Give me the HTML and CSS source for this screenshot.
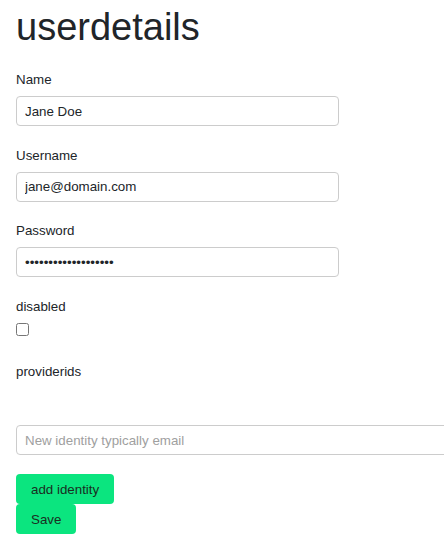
FILE: index.html
```html
<!DOCTYPE html>
<html>
<head>
<meta charset="utf-8">
<link rel="stylesheet" href="styles.css">
</head>
<body>
<div class="page">
  <h1 class="title">userdetails</h1>
  <div class="field">
    <label class="label">Name</label>
    <input class="input" type="text" value="Jane Doe">
  </div>
  <div class="field">
    <label class="label">Username</label>
    <input class="input" type="text" value="jane@domain.com">
  </div>
  <div class="field">
    <label class="label">Password</label>
    <input class="input" type="password" value="xxxxxxxxxxxxxxxxxxx">
  </div>
  <div class="field check-field">
    <label class="label">disabled</label>
    <input class="check" type="checkbox">
  </div>
  <div class="field providers">
    <label class="label">providerids</label>
  </div>
  <input class="input wide" type="text" placeholder="New identity typically email">
  <div class="actions">
    <button class="btn">add identity</button>
    <button class="btn">Save</button>
  </div>
</div>
</body>
</html>
```
FILE: styles.css
```css
html, body {
  margin: 0;
  padding: 0;
  background: #fff;
}
body {
  font-family: "Liberation Sans", Arial, sans-serif;
  color: #212529;
  font-size: 13.33px;
  line-height: 20px;
}
.page {
  padding: 0 16px;
  width: 412px;
}
.title {
  font-size: 38px;
  font-weight: 400;
  line-height: 46px;
  margin: 4px 0 20px;
  color: #212529;
}
.field {
  margin-bottom: 19.5px;
}
.label {
  display: block;
  margin-bottom: 6px;
}
.input {
  display: block;
  box-sizing: border-box;
  width: 323px;
  height: 30px;
  padding: 0 8px;
  border: 1px solid #ccc;
  border-radius: 4px;
  font-family: "Liberation Sans", Arial, sans-serif;
  font-size: 13.33px;
  color: #212529;
  background: #fff;
}
.input::placeholder {
  color: #a0a0a0;
}
.check {
  display: block;
  margin: 0;
  width: 13px;
  height: 13px;
}
.check-field {
  margin-bottom: 26px;
}
.providers {
  margin-bottom: 0;
  height: 63.5px;
}
.wide {
  width: 440px;
}
.actions {
  display: flex;
  flex-direction: column;
  align-items: flex-start;
  margin-top: 19px;
}
.btn {
  height: 30px;
  padding: 0 15px;
  border: none;
  border-radius: 4px;
  background: #0be57f;
  color: #1a2e22;
  font-family: "Liberation Sans", Arial, sans-serif;
  font-size: 13.33px;
}
```
